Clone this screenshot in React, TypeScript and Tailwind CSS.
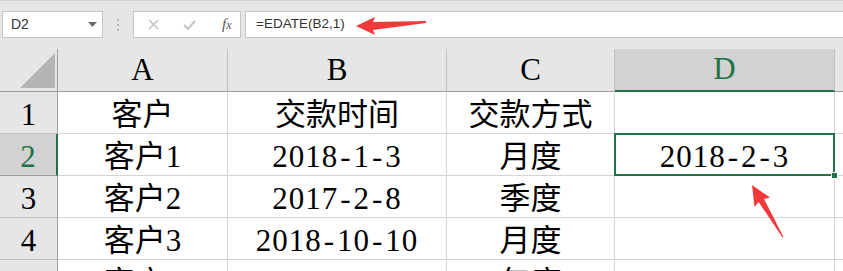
import React from "react";

const COLS = ["A", "B", "C", "D"];

const ROWS: string[][] = [
  ["客户", "交款时间", "交款方式", ""],
  ["客户1", "2018-1-3", "月度", "2018-2-3"],
  ["客户2", "2017-2-8", "季度", ""],
  ["客户3", "2018-10-10", "月度", ""],
  ["客户4", "", "年度", ""],
];

const cellFont = { fontFamily: '"Liberation Serif", "Noto Sans CJK SC", serif' };

function CellText({ v }: { v: string }) {
  if (!/^\d{4}-/.test(v)) return <>{v}</>;
  return (
    <span className="tracking-[1px]">
      {v.split("-").map((p, k) => (
        <React.Fragment key={k}>
          {k > 0 && <span className="px-[2px]">-</span>}
          {p}
        </React.Fragment>
      ))}
    </span>
  );
}

function FormulaBar() {
  return (
    <div className="flex h-[49px] items-start border-t border-[#d4d4d4] bg-[#e6e6e6] pt-[10px]">
      {/* name box */}
      <div className="ml-[2px] flex h-[27px] w-[101px] items-center justify-between border border-[#c6c6c6] bg-white pl-[8px] pr-[5px]">
        <span className="text-[14px] text-[#333]" style={{ fontFamily: '"Liberation Sans", sans-serif' }}>D2</span>
        <svg width="9" height="5" viewBox="0 0 9 5"><path d="M0 0h9L4.5 5z" fill="#6b6b6b" /></svg>
      </div>
      {/* grip dots */}
      <div className="ml-[14px] flex h-[27px] flex-col items-center justify-center gap-[3px]">
        <span className="h-[2px] w-[2px] bg-[#b5b5b5]" />
        <span className="h-[2px] w-[2px] bg-[#b5b5b5]" />
        <span className="h-[2px] w-[2px] bg-[#b5b5b5]" />
      </div>
      {/* cancel / enter / fx */}
      <div className="ml-[14px] flex h-[27px] w-[108px] items-center border border-[#c6c6c6] bg-white">
        <svg className="ml-[14px]" width="11" height="11" viewBox="0 0 11 11">
          <path d="M1 1l9 9M10 1l-9 9" stroke="#bdbdbd" strokeWidth="1.4" />
        </svg>
        <svg className="ml-[24px]" width="13" height="10" viewBox="0 0 13 10">
          <path d="M1 5l4 4 7-8" stroke="#c4c4c4" strokeWidth="2" fill="none" />
        </svg>
        <span className="ml-[26px] text-[15px] italic text-[#555]" style={{ fontFamily: '"Liberation Serif", serif' }}>
          f<span className="text-[12px]">x</span>
        </span>
      </div>
      {/* formula input */}
      <div className="ml-[4px] flex h-[27px] flex-1 items-center border-y border-l border-[#c6c6c6] bg-white pl-[10px]">
        <span className="text-[13.5px] text-[#333]" style={{ fontFamily: '"Liberation Sans", sans-serif' }}>=EDATE(B2,1)</span>
      </div>
    </div>
  );
}

function Sheet() {
  return (
    <div
      className="grid grid-cols-[58px_170px_219px_168px_220px_1fr] grid-rows-[43px_42px_42px_42px_42px_42px] text-[31px] text-black"
      style={cellFont}
    >
      {/* corner */}
      <div className="relative border-b border-r border-[#9e9e9e] bg-[#e6e6e6]">
        <svg className="absolute left-[20px] top-[4px]" width="35" height="35" viewBox="0 0 35 35">
          <path d="M35 0V35H0z" fill="#b4b4b4" />
        </svg>
      </div>
      {COLS.map((c) => (
        <div
          key={c}
          className={
            c === "D"
              ? "flex items-center justify-center border-b-2 border-r border-b-[#217346] border-r-[#c0c0c0] bg-[#d2d2d2] text-[#217346]"
              : "flex items-center justify-center border-b border-r border-b-[#9e9e9e] border-r-[#c0c0c0] bg-[#e6e6e6]"
          }
        >
          {c}
        </div>
      ))}
      <div className="border-b border-[#9e9e9e] bg-[#e6e6e6]" />

      {ROWS.map((row, i) => (
        <React.Fragment key={i}>
          <div
            className={
              i === 1
                ? "flex items-center justify-center border-b border-r-2 border-b-[#9e9e9e] border-r-[#217346] bg-[#d2d2d2] pt-[6px] text-[#217346]"
                : "flex items-center justify-center border-b border-r border-b-[#c0c0c0] border-r-[#9e9e9e] bg-[#e6e6e6] pt-[6px]"
            }
          >
            {i < 4 ? i + 1 : ""}
          </div>
          {row.map((v, j) =>
            i === 1 && j === 3 ? (
              <div key={j} className="relative -ml-px -mt-px flex items-center justify-center border-2 border-[#217346] pt-[6px]">
                <CellText v={v} />
                <span className="absolute -bottom-[5px] -right-[5px] h-[7px] w-[7px] border border-white bg-[#217346]" />
              </div>
            ) : (
              <div key={j} className="flex items-center justify-center border-b border-r border-[#d4d4d4] pt-[6px]">
                <CellText v={v} />
              </div>
            )
          )}
          <div className="border-b border-[#d4d4d4]" />
        </React.Fragment>
      ))}
    </div>
  );
}

export default function App() {
  return (
    <div className="relative h-[271px] w-[843px] overflow-hidden bg-white">
      <FormulaBar />
      <Sheet />
      {/* annotation arrows */}
      <svg className="pointer-events-none absolute left-0 top-0" width="843" height="271">
        <polygon points="356,26 375,17 373,22 426,21 426,23 373,30 375,35" fill="#f23a3a" />
        <polygon points="752,185 770,197.6 764,199 783.5,237 782.5,237.5 758.6,202 754.5,207" fill="#f23a3a" />
      </svg>
    </div>
  );
}
